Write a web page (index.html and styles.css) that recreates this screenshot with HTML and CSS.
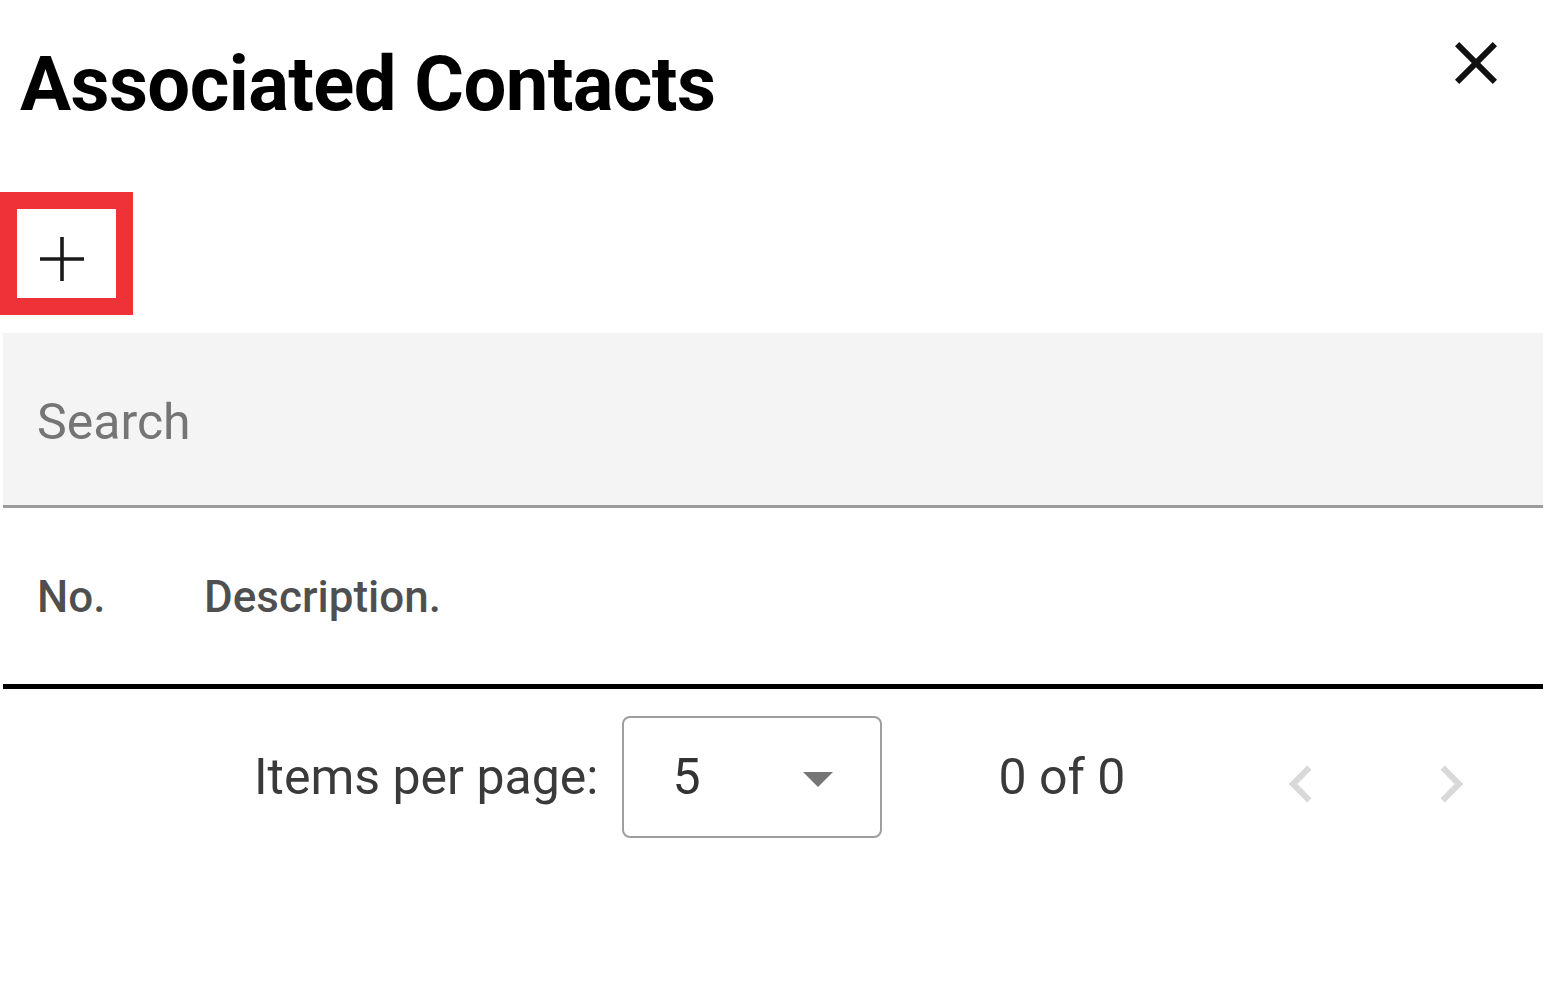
FILE: index.html
```html
<!DOCTYPE html>
<html lang="en">
<head>
<meta charset="utf-8">
<title>Associated Contacts</title>
<link rel="stylesheet" href="styles.css">
</head>
<body>
<div class="dialog">
  <div class="dialog-header">
    <h2 class="dialog-title">Associated Contacts</h2>
    <button class="close-btn" aria-label="Close">
      <svg width="72" height="72" viewBox="0 0 24 24"><path d="M19 6.41L17.59 5 12 10.59 6.41 5 5 6.41 10.59 12 5 17.59 6.41 19 12 13.41 17.59 19 19 17.59 13.41 12z" fill="#111"/></svg>
    </button>
  </div>

  <button class="add-btn" aria-label="Add">
    <svg width="44" height="44" viewBox="0 0 44 44"><path d="M22 0V44M0 22H44" stroke="#1a1a1a" stroke-width="3.6" fill="none"/></svg>
  </button>

  <div class="search-field">
    <span class="search-placeholder">Search</span>
  </div>

  <div class="table-header">
    <div class="th th-no">No.</div>
    <div class="th th-desc">Description.</div>
  </div>

  <div class="paginator">
    <span class="pg-label">Items per page:</span>
    <div class="pg-select">
      <span class="pg-value">5</span>
      <span class="pg-caret"></span>
    </div>
    <span class="pg-range">0 of 0</span>
    <span class="pg-btn">
      <svg width="74" height="74" viewBox="0 0 24 24"><path d="M15.41 7.41L14 6l-6 6 6 6 1.41-1.41L10.83 12z" fill="#d9d9d9"/></svg>
    </span>
    <span class="pg-btn pg-next">
      <svg width="74" height="74" viewBox="0 0 24 24"><path d="M10 6L8.59 7.41 13.17 12l-4.58 4.59L10 18l6-6z" fill="#d9d9d9"/></svg>
    </span>
  </div>
</div>
</body>
</html>
```

FILE: styles.css
```css
html, body {
  margin: 0;
  padding: 0;
  background: #fff;
}

body {
  font-family: Roboto, "Liberation Sans", Arial, sans-serif;
  width: 1543px;
  height: 990px;
  overflow: hidden;
}

.dialog {
  display: flex;
  flex-direction: column;
}

.dialog-header {
  display: flex;
  justify-content: space-between;
  align-items: flex-start;
  padding: 27px 31px 0 20px;
}

.dialog-title {
  margin: 7px 0 0 0;
  font-size: 76px;
  line-height: 100px;
  font-weight: 700;
  color: #000;
  letter-spacing: -0.6px;
}

.close-btn {
  border: 0;
  background: none;
  padding: 0;
  margin: 0;
  width: 72px;
  height: 72px;
  display: block;
}

.close-btn svg {
  display: block;
}

.add-btn {
  margin: 58px 0 0 0;
  width: 133px;
  height: 123px;
  box-sizing: border-box;
  border: 17px solid #ee3237;
  background: #fff;
  padding: 28px 0 0 23px;
  display: flex;
  align-items: flex-start;
  justify-content: flex-start;
}

.add-btn svg {
  display: block;
}

.search-field {
  margin: 18px 0 0 3px;
  background: #f4f4f4;
  border-bottom: 3px solid #9c9c9c;
  padding: 59px 0 53px 34px;
}

.search-placeholder {
  display: block;
  font-size: 50px;
  line-height: 60px;
  color: #757575;
}

.table-header {
  margin-left: 3px;
  display: flex;
  padding: 64px 0 62px 34px;
  border-bottom: 5px solid #000;
}

.th {
  font-size: 44px;
  line-height: 50px;
  font-weight: 500;
  color: rgba(0, 0, 0, 0.7);
}

.th-no {
  width: 167px;
}

.paginator {
  display: flex;
  align-items: center;
  padding: 27px 0 0 254px;
  color: #3a3a3a;
}

.paginator > * {
  flex-shrink: 0;
}

.pg-label {
  font-size: 50px;
  line-height: 60px;
}

.pg-select {
  margin-left: 24px;
  width: 260px;
  height: 122px;
  box-sizing: border-box;
  border: 2px solid #9e9e9e;
  border-radius: 8px;
  display: flex;
  align-items: center;
  justify-content: space-between;
  padding: 0 47px 0 48px;
}

.pg-value {
  font-size: 50px;
  line-height: 60px;
  color: #333;
}

.pg-caret {
  width: 0;
  height: 0;
  border-left: 15px solid transparent;
  border-right: 15px solid transparent;
  border-top: 15px solid #757575;
  margin-top: 5px;
}

.pg-range {
  margin-left: 116px;
  font-size: 50px;
  line-height: 60px;
}

.pg-btn {
  display: block;
  margin-left: 139px;
  margin-top: 13px;
  width: 74px;
  height: 74px;
}

.pg-btn svg {
  display: block;
}

.pg-btn.pg-next {
  margin-left: 76px;
}
```
